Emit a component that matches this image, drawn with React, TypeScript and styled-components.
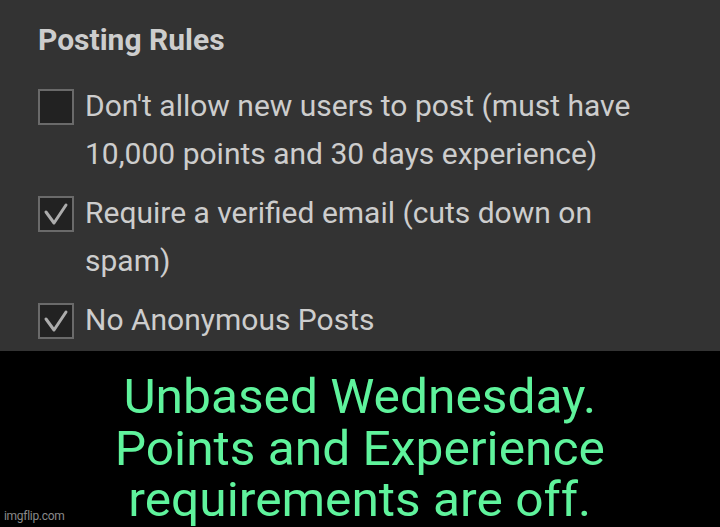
import React from 'react'
import styled, { createGlobalStyle } from 'styled-components'

const GlobalStyle = createGlobalStyle`
  html, body {
    margin: 0;
    padding: 0;
    background: #000;
  }
  body {
    font-family: Roboto, "Noto Sans", sans-serif;
  }
`

const Page = styled.div`
  position: relative;
  width: 720px;
  height: 527px;
  display: flex;
  flex-direction: column;
  overflow: hidden;
`

const Panel = styled.section`
  height: 351px;
  box-sizing: border-box;
  padding: 22px 70px 0 38px;
  background-color: #333333;
  color: #cdcdcd;
`

const Title = styled.h2`
  margin: 0 0 24px;
  font-size: 30px;
  line-height: 36px;
  font-weight: 700;
`

const RuleList = styled.div`
  display: flex;
  flex-direction: column;
  gap: 11px;
`

const Rule = styled.label`
  display: flex;
  align-items: flex-start;
  gap: 11px;
`

const Box = styled.span`
  flex: none;
  width: 36px;
  height: 36px;
  margin-top: 7px;
  box-sizing: border-box;
  border: 2px solid #6a6a6a;
  background-color: #222222;
  display: flex;
  align-items: center;
  justify-content: center;
`

const RuleText = styled.span`
  font-size: 30px;
  line-height: 48px;
`

const Caption = styled.section`
  flex: 1;
  display: flex;
  justify-content: center;
  background-color: #000;
  padding-top: 20px;
`

// the meme text is stretched a little wider than the font draws it
const CaptionText = styled.p`
  margin: 0;
  color: #5ff39c;
  font-size: 48px;
  line-height: 51.5px;
  text-align: center;
  transform: scaleX(1.035);
`

const Watermark = styled.span`
  position: absolute;
  left: 4px;
  bottom: 4px;
  font-size: 12px;
  color: #8a8a8a;
  letter-spacing: -0.3px;
`

const Checkbox: React.FC<{ checked?: boolean }> = ({ checked }) => (
  <Box>
    {checked && (
      <svg width="32" height="32" viewBox="0 0 32 32">
        <polyline
          points="6,14 14,25 26,7"
          fill="none"
          stroke="#acacac"
          strokeWidth="3"
          strokeLinecap="round"
          strokeLinejoin="round"
        />
      </svg>
    )}
  </Box>
)

const rules = [
  {
    text: "Don't allow new users to post (must have 10,000 points and 30 days experience)",
    checked: false,
  },
  { text: 'Require a verified email (cuts down on spam)', checked: true },
  { text: 'No Anonymous Posts', checked: true },
]

export default function App() {
  return (
    <Page>
      <GlobalStyle />
      <Panel>
        <Title>Posting Rules</Title>
        <RuleList>
          {rules.map(rule => (
            <Rule key={rule.text}>
              <Checkbox checked={rule.checked} />
              <RuleText>{rule.text}</RuleText>
            </Rule>
          ))}
        </RuleList>
      </Panel>
      <Caption>
        <CaptionText>
          Unbased Wednesday.
          <br />
          Points and Experience
          <br />
          requirements are off.
        </CaptionText>
      </Caption>
      <Watermark>imgflip.com</Watermark>
    </Page>
  )
}
